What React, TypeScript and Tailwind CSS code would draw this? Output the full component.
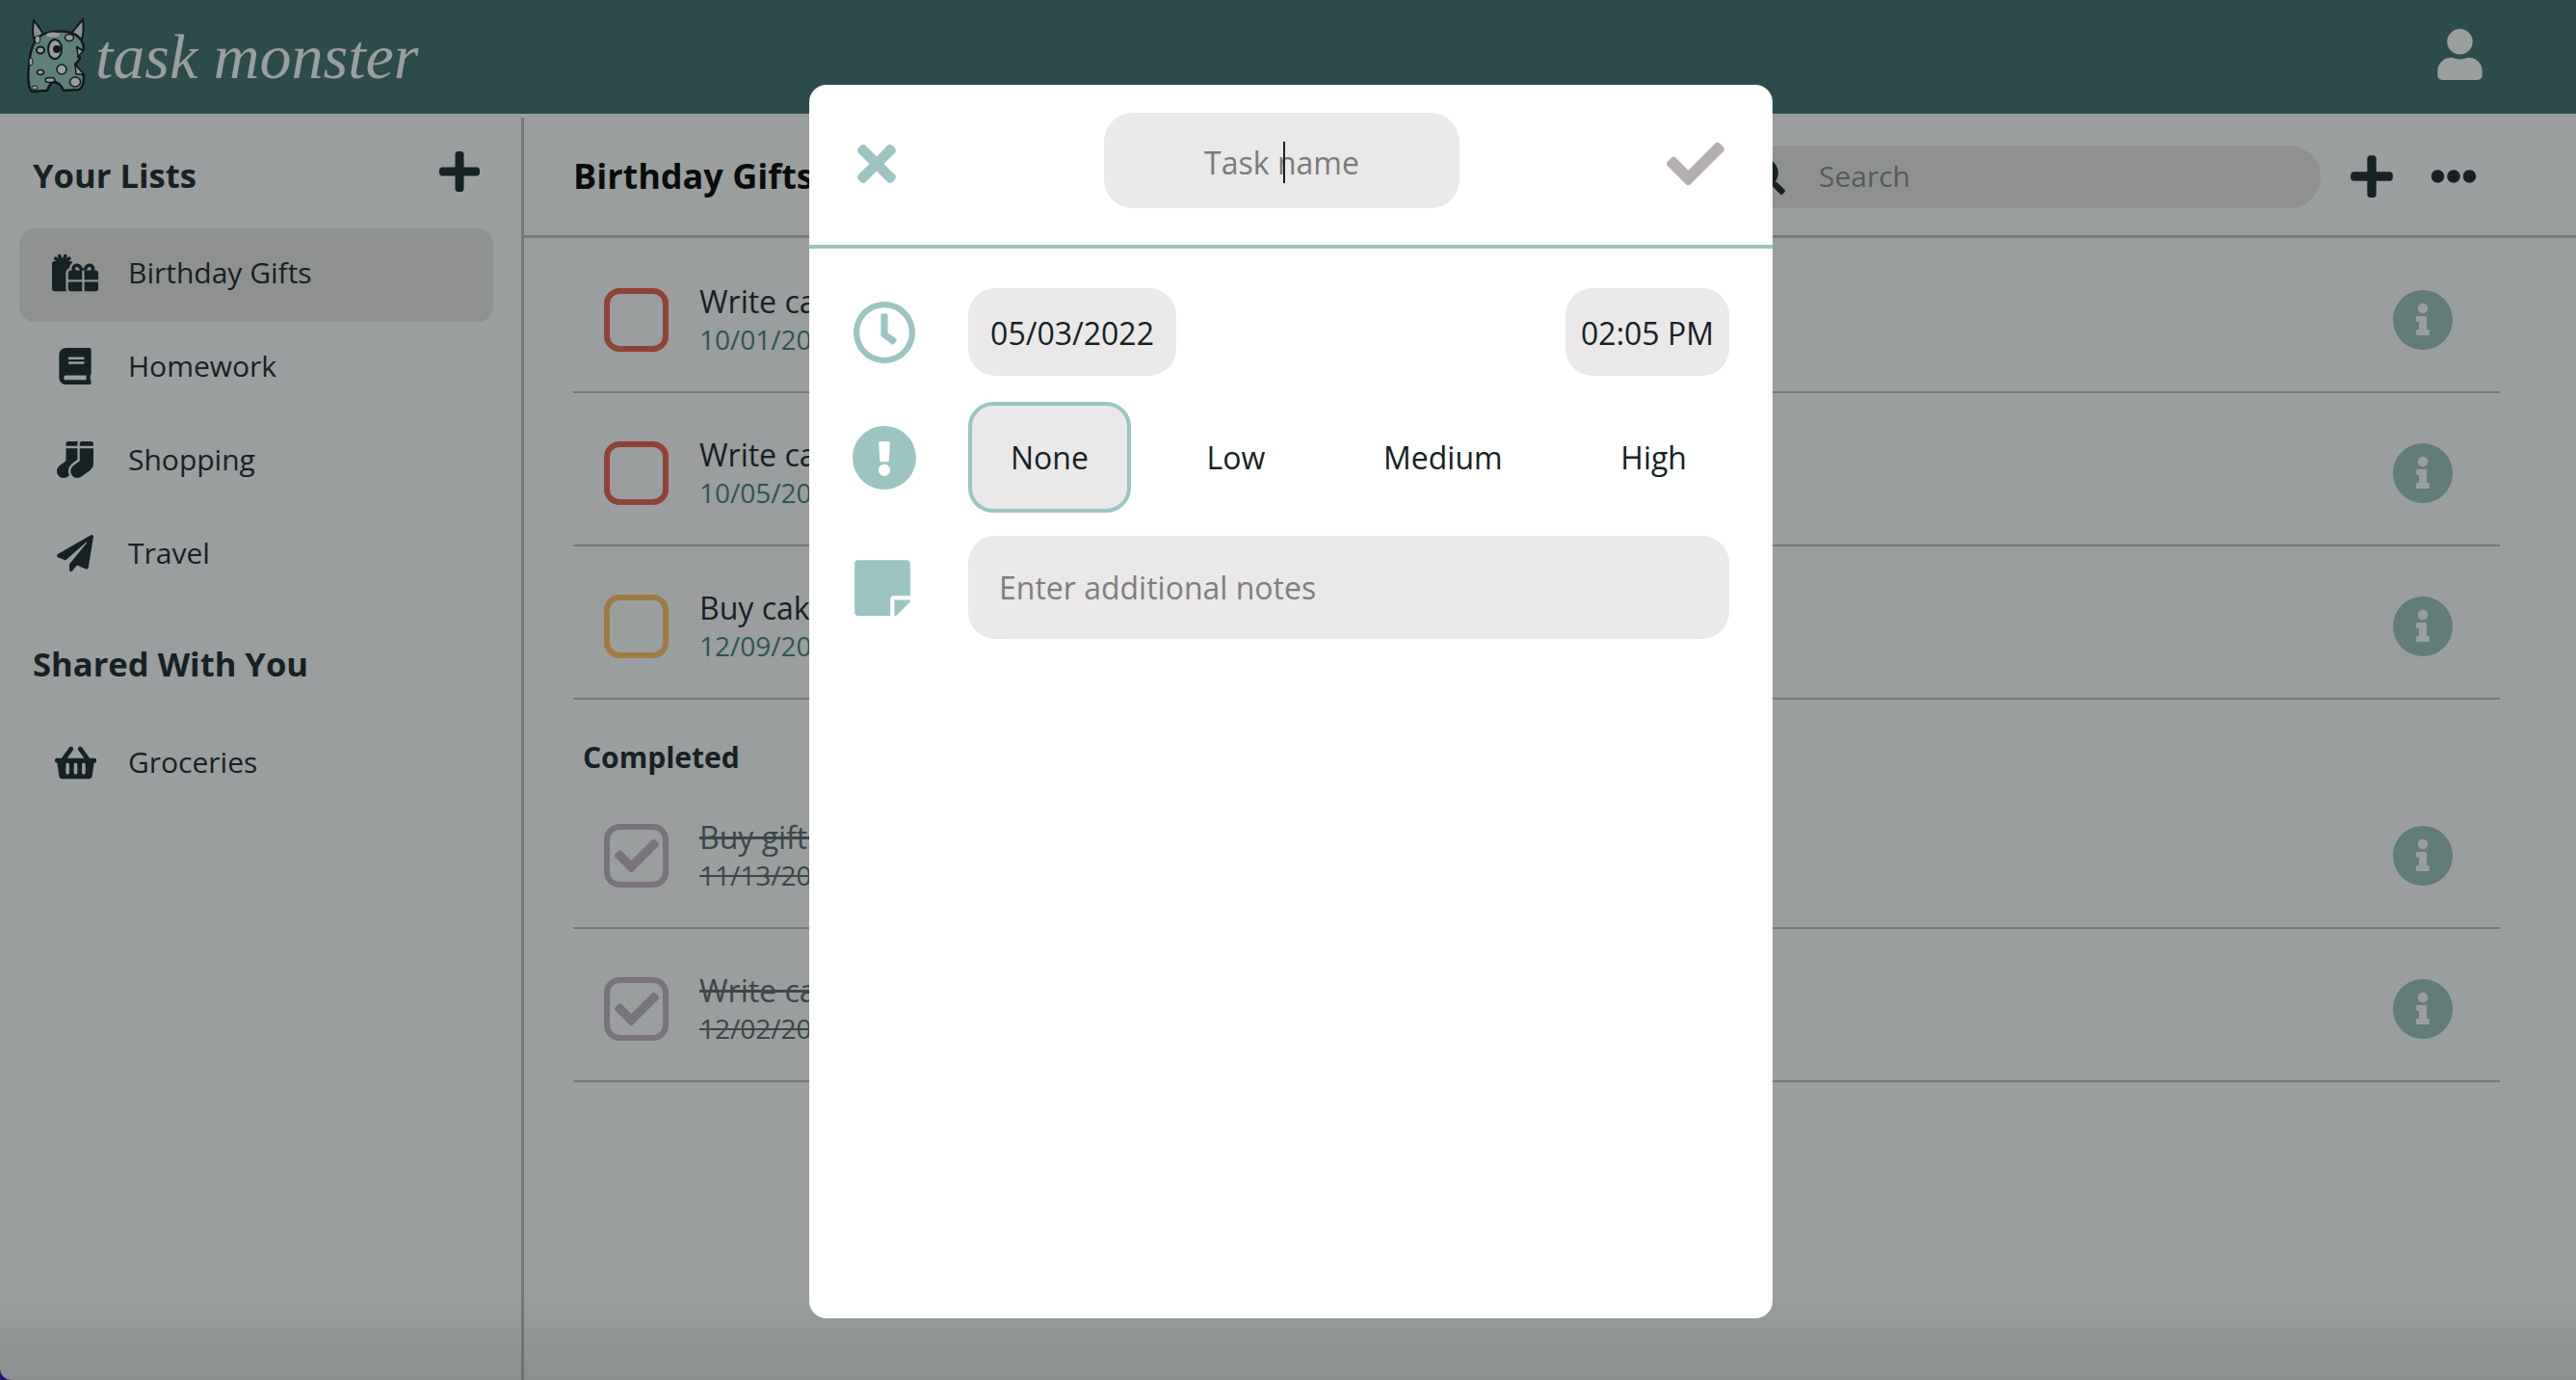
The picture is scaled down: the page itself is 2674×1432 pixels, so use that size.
import { FaBook, FaCheck, FaEllipsisH, FaExclamationCircle, FaGifts, FaInfoCircle, FaPaperPlane, FaPlus, FaRegClock, FaSearch, FaShoppingBasket, FaSocks, FaStickyNote, FaTimes, FaUser } from "react-icons/fa";

const openSans = { fontFamily: '"Open Sans", sans-serif' };

const lists = [
    { name: "Birthday Gifts", icon: <FaGifts size={48} />, active: true },
    { name: "Homework", icon: <FaBook size={38} /> },
    { name: "Shopping", icon: <FaSocks size={38} /> },
    { name: "Travel", icon: <FaPaperPlane size={38} /> },
];

const openTasks = [
    { title: "Write card for Dad", date: "10/01/2022", border: "border-[#8f4338]" },
    { title: "Write card for Mom", date: "10/05/2022", border: "border-[#8f4338]" },
    { title: "Buy cake for party", date: "12/09/2022", border: "border-[#9f7c46]" },
];

const doneTasks = [
    { title: "Buy gifts for family", date: "11/13/2022" },
    { title: "Write card for Sam", date: "12/02/2022" },
];

const priorities = ["None", "Low", "Medium", "High"];

const MonsterLogo = () => (
    <svg width="62" height="80" viewBox="0 0 62 80" className="shrink-0">
        <path d="M8 26 C5 18 6 10 7 4 C11 9 15 15 18 20 Z" fill="#8c9391" stroke="#11191b" strokeWidth="2" />
        <path d="M44 20 C48 15 53 9 58 3 C59 11 59 19 56 26 Z" fill="#8c9391" stroke="#11191b" strokeWidth="2" />
        <path d="M14 20 C24 14 44 14 52 20 C58 25 60 32 58 36 L52 32 L55 44 L50 50 L59 62 C59 68 58 74 54 76 L38 77 C36 72 32 68 27 68 C24 70 22 74 21 77 L5 78 C1 74 1 60 2 50 C3 38 6 26 14 20 Z" fill="#5f7f7c" stroke="#11191b" strokeWidth="2.5" strokeLinejoin="round" />
        <path d="M52 32 L58 36 L53 42 Z M50 50 L59 60 L51 60 Z" fill="#9a9e9e" stroke="#11191b" strokeWidth="1.5" />
        <ellipse cx="29" cy="34" rx="7" ry="10" fill="#9a9e9e" stroke="#11191b" strokeWidth="2" />
        <circle cx="31" cy="34" r="4" fill="#11191b" />
        <ellipse cx="44" cy="22" rx="4.5" ry="3.5" fill="#9a9e9e" stroke="#11191b" strokeWidth="1.5" />
        <ellipse cx="14" cy="35" rx="4" ry="3.5" fill="#9a9e9e" stroke="#11191b" strokeWidth="2" />
        <ellipse cx="36" cy="55" rx="5" ry="5" fill="#9a9e9e" stroke="#11191b" strokeWidth="1.5" />
        <ellipse cx="14" cy="58" rx="3.5" ry="2.5" fill="#9a9e9e" stroke="#11191b" strokeWidth="1.5" />
        <ellipse cx="50" cy="68" rx="5.5" ry="5" fill="#9a9e9e" stroke="#11191b" strokeWidth="1.5" />
        <ellipse cx="27" cy="19" rx="7" ry="2.5" fill="#9a9e9e" />
        <ellipse cx="11" cy="24" rx="3" ry="4" fill="#9a9e9e" stroke="#11191b" strokeWidth="1" />
        <ellipse cx="4" cy="47" rx="2" ry="4" fill="#9a9e9e" stroke="#11191b" strokeWidth="1" />
        <ellipse cx="24" cy="66" rx="5" ry="2.5" fill="#9a9e9e" stroke="#11191b" strokeWidth="1.5" />
        <ellipse cx="8" cy="74" rx="3" ry="2" fill="#9a9e9e" stroke="#11191b" strokeWidth="1" />
    </svg>
);

const TopBar = () => (
    <header className="flex h-[118px] items-start justify-between bg-[#2c4c4c]">
        <div className="flex items-start pl-[28px] pt-[17px]">
            <MonsterLogo />
            <span className="ml-[9px] mt-[6px] text-[66px] leading-[72px] italic text-[#9a9e9e]" style={{ fontFamily: '"Liberation Serif", serif' }}>task monster</span>
        </div>
        <div className="pr-[94px] pt-[30px] text-[#9a9e9e]">
            <FaUser size={53} />
        </div>
    </header>
);

const Sidebar = () => (
    <aside className="w-[541px] shrink-0 pl-[20px] pr-[29px] text-[#162124]">
        <div className="flex h-[115px] items-center justify-between pl-[14px] pr-[11px]">
            <h2 className="mt-[6px] text-[34.6px] font-bold leading-none">Your Lists</h2>
            <FaPlus size={48} className="-mt-[3px]" />
        </div>
        <ul>
            {lists.map((l) => (
                <li key={l.name} className={`flex h-[97px] items-center gap-[31px] rounded-[16px] pb-[5px] pl-[34px] ${l.active ? "bg-[#8f918f]" : ""}`}>
                    <span className="flex w-[48px] justify-center">{l.icon}</span>
                    <span className="-mt-[2px] text-[30px]">{l.name}</span>
                </li>
            ))}
        </ul>
        <h2 className="flex h-[120px] items-center pl-[14px] pt-[9px] text-[34.6px] font-bold leading-none">Shared With You</h2>
        <div className="flex h-[97px] items-center gap-[31px] pb-[5px] pl-[34px]">
            <span className="flex w-[48px] justify-center"><FaShoppingBasket size={43} /></span>
            <span className="-mt-[2px] text-[30px]">Groceries</span>
        </div>
    </aside>
);

const TaskRow = ({ title, date, border, done }: { title: string; date: string; border?: string; done?: boolean }) => (
    <div className="flex h-[159px] items-center border-b-2 border-[#78787a] pl-[32px] pr-[48px] pt-[8px]">
        <span className={`flex h-[66px] w-[67px] shrink-0 items-center justify-center rounded-[16px] border-[6px] ${done ? "border-[#78747a] text-[#78747a]" : border}`}>
            {done && <FaCheck size={46} />}
        </span>
        <div className={`ml-[32px] flex-1 ${done ? "line-through text-[#3c4748]" : ""}`}>
            <div className={`text-[32px] leading-[40px] ${done ? "" : "text-[#162124]"}`}>{title}</div>
            <div className={`text-[28px] leading-[38px] ${done ? "" : "text-[#2f5553]"}`}>{date}</div>
        </div>
        <FaInfoCircle size={64} className="text-[#627d79]" />
    </div>
);

const MainPanel = () => (
    <main className="flex-1 border-l-[3px] border-[#78787c]">
        <div className="flex h-[125px] items-center justify-between border-b-[3px] border-[#78787a] pl-[51px] pr-[103px]">
            <h1 className="text-[36px] font-bold text-[#0a0c0c]">Birthday Gifts</h1>
            <div className="flex items-center">
                <div className="flex h-[65px] w-[720px] items-center rounded-full bg-[#8f918f] pl-[126px] text-[30px] text-[#555a5a]">
                    <FaSearch size={38} className="mr-[35px] text-[#162124]" />
                    <span className="-mt-[2px]">Search</span>
                </div>
                <FaPlus size={50} className="ml-[28px] text-[#162124]" />
                <FaEllipsisH size={48} className="ml-[36px] text-[#162124]" />
            </div>
        </div>
        <div className="ml-[51px] mr-[79px] mt-[2px]">
            {openTasks.map((t) => <TaskRow key={t.date} {...t} />)}
            <h3 className="flex h-[79px] items-end pb-[4px] pl-[10px] text-[30px] font-bold leading-none text-[#162124]">Completed</h3>
            {doneTasks.map((t) => <TaskRow key={t.date} {...t} done />)}
        </div>
    </main>
);

const TaskModal = () => (
    <div className="absolute left-[840px] top-[88px] flex h-[1280px] w-[1000px] flex-col overflow-hidden rounded-[18px] bg-white text-[#162124]">
        <div className="flex h-[170px] shrink-0 items-start border-b-4 border-[#9cc5c1] pl-[41px] pr-[50px]">
            <FaTimes size={58} className="mt-[53px] text-[#9cc5c1]" />
            <div className="relative ml-[207px] mt-[29px] flex h-[99px] w-[369px] items-center justify-center rounded-[30px] bg-[#eae8e9] pt-[4px] text-[32px] text-[#7a7a7a]">
                Task name
                <span className="absolute left-[186px] top-[30px] h-[43px] w-[2px] bg-[#162124]" />
            </div>
            <FaCheck size={60} className="ml-auto mt-[52px] text-[#b6afb0]" />
        </div>
        <div className="flex flex-col px-[45px]">
            <div className="mt-[41px] flex h-[91px] items-center">
                <span className="flex w-[120px] shrink-0"><FaRegClock size={66} className="text-[#9cc5c1]" /></span>
                <div className="flex h-full flex-1 items-center justify-between">
                    <div className="flex h-full w-[216px] items-center justify-center rounded-[28px] bg-[#eae8e9] pt-[2px] text-[32px]">05/03/2022</div>
                    <div className="flex h-full w-[170px] items-center justify-center rounded-[28px] bg-[#eae8e9] pt-[2px] text-[32px]">02:05 PM</div>
                </div>
            </div>
            <div className="mt-[27px] flex h-[115px] items-center">
                <span className="flex w-[120px] shrink-0"><FaExclamationCircle size={68} className="-ml-[1px] text-[#9cc5c1]" /></span>
                <div className="flex h-full flex-1 items-center justify-between">
                    {priorities.map((p, i) => (
                        <div key={p} className={`flex h-full items-center rounded-[26px] border-4 px-[40px] text-[32px] ${i === 0 ? "border-[#9cc5c1] bg-[#eae8e9]" : "border-transparent"}`}>{p}</div>
                    ))}
                </div>
            </div>
            <div className="mt-[24px] flex h-[107px] items-center">
                <span className="flex w-[120px] shrink-0"><FaStickyNote size={66} className="-ml-[2px] text-[#9cc5c1]" /></span>
                <div className="flex h-full flex-1 items-center rounded-[28px] bg-[#eae8e9] pl-[32px] text-[32px] text-[#7e7e7e]">Enter additional notes</div>
            </div>
        </div>
    </div>
);

const App = () => {
    return (
        <div className="relative h-[1432px] w-[2674px] overflow-hidden bg-[#2a1878]" style={openSans}>
            <div className="flex h-full flex-col overflow-hidden rounded-bl-[12px] bg-[#9a9e9e]">
                <TopBar />
                <div className="mt-[4px] flex flex-1">
                    <Sidebar />
                    <MainPanel />
                </div>
            </div>
            <div className="pointer-events-none absolute inset-x-0 bottom-0 h-[90px] bg-gradient-to-b from-transparent to-[#00000018]" />
            <TaskModal />
        </div>
    );
};

export default App;
